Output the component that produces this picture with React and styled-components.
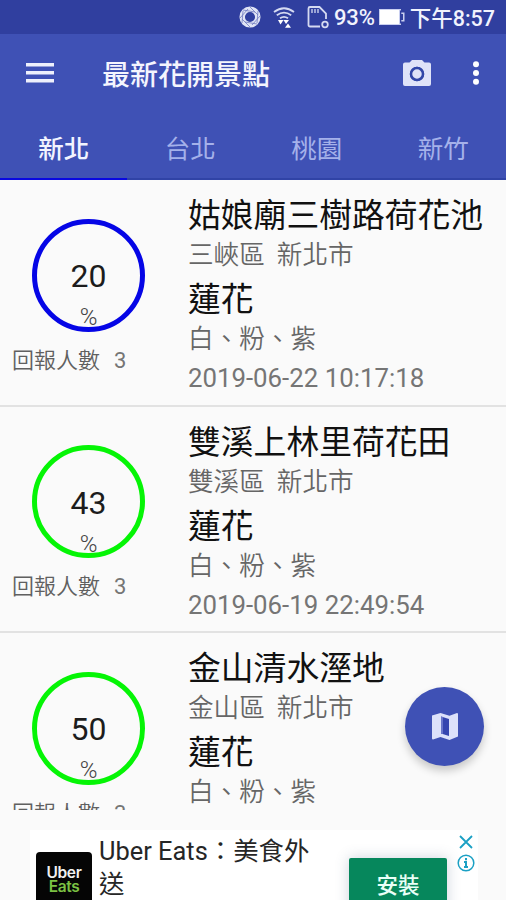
import React from "react";
import styled, { createGlobalStyle } from "styled-components";

const GlobalStyle = createGlobalStyle`
  * {
    box-sizing: border-box;
  }

  body {
    margin: 0;
    background: #fafafa;
    font-family: Roboto, "Noto Sans CJK TC", sans-serif;
    overflow: hidden;
  }
`;

const TABS = ["新北", "台北", "桃園", "新竹"];

const SPOTS = [
  {
    name: "姑娘廟三樹路荷花池",
    area: "三峽區",
    city: "新北市",
    flower: "蓮花",
    colors: "白、粉、紫",
    time: "2019-06-22 10:17:18",
    percent: 20,
    reports: 3,
    ring: "#0505e6",
  },
  {
    name: "雙溪上林里荷花田",
    area: "雙溪區",
    city: "新北市",
    flower: "蓮花",
    colors: "白、粉、紫",
    time: "2019-06-19 22:49:54",
    percent: 43,
    reports: 3,
    ring: "#05f505",
  },
  {
    name: "金山清水溼地",
    area: "金山區",
    city: "新北市",
    flower: "蓮花",
    colors: "白、粉、紫",
    percent: 50,
    reports: 3,
    ring: "#05f505",
  },
];

const StatusIcons = () => (
  <>
    <svg width="24" height="24" viewBox="0 0 24 24" fill="none">
      <circle cx="12" cy="12" r="7.800" stroke="#e0e4f5" strokeWidth="5.500" />
      <path
        d="M12 2l8 8M5 5l12 2M2 13L10 4M4 18l1-12M12 22l-8-8M19 19L7 17M22 11l-8 9M20 6l-1 12"
        stroke="#6f7abf"
        strokeWidth="0.800"
      />
    </svg>
    <svg width="24" height="24" viewBox="0 0 24 24" fill="none">
      <path
        d="M2 7Q12-.5 22 7M4.8 10.300Q12 5 19.2 10.300M8 13.3Q12 10.4 16 13.3"
        stroke="#d5daf1"
        strokeWidth="1.8"
      />
      <path d="M6 15h5.500L8.500 19.500zM11.500 15h5.500L14 19zM13 22.800h6L16 18.500z" fill="#fff" />
    </svg>
    <svg width="24" height="24" viewBox="0 0 24 24" fill="none">
      <path
        d="M14 21.500H4A1.500 1.500 0 0 1 2.500 20V3.500A1.500 1.500 0 0 1 4 2h9.500l6.500 6.500V14"
        stroke="#d5daf1"
        strokeWidth="1.800"
      />
      <path d="M6 4v4M9 4v4M12 4v4" stroke="#d5daf1" strokeWidth="1.300" />
      <circle cx="19" cy="19.500" r="2.800" stroke="#d5daf1" strokeWidth="1.800" />
    </svg>
  </>
);

const BloomRow = ({ spot }) => (
  <Row>
    <Gauge>
      <Ring color={spot.ring}>
        <Value>{spot.percent}</Value>
        <Percent>%</Percent>
      </Ring>
      <Reports>
        回報人數<span>{spot.reports}</span>
      </Reports>
    </Gauge>
    <Info>
      <Title>{spot.name}</Title>
      <Detail>
        {spot.area}
        <span>{spot.city}</span>
      </Detail>
      <Title as="h3">{spot.flower}</Title>
      <Detail>{spot.colors}</Detail>
      {spot.time && <Time>{spot.time}</Time>}
    </Info>
  </Row>
);

const App = () => {
  return (
    <Screen>
      <GlobalStyle />
      <StatusBar>
        <StatusIcons />
        <BatteryText>93%</BatteryText>
        <svg width="26" height="16" viewBox="0 0 26 16">
          <path d="M0 0h22v3.500h3.500v9H22V16H0z" fill="#c9cff0" />
          <path d="M1 1h19v14H1z" fill="#fff" />
          <path d="M21 1.500h1.300v3.500H24v6h-1.700v3.500H21z" fill="#303f9f" />
        </svg>
        <Clock>下午8:57</Clock>
      </StatusBar>

      <Toolbar>
        <svg width="28" height="20" viewBox="0 0 28 20">
          <path d="M0 0h28v3.500H0zM0 8h28v3.500H0zM0 16h28v3.500H0z" fill="#eef0fc" />
        </svg>
        <AppTitle>最新花開景點</AppTitle>
        <svg width="28" height="26" viewBox="0 0 28 26">
          <path
            fillRule="evenodd"
            d="M9 0h10l2.500 2.500H26a2 2 0 0 1 2 2V24a2 2 0 0 1-2 2H2a2 2 0 0 1-2-2V4.500a2 2 0 0 1 2-2h4.500zM14 6.800a7.200 7.200 0 1 0 0 14.400a7.200 7.200 0 0 0 0-14.400z"
            fill="#dfe3f8"
          />
          <circle cx="14" cy="14" r="4.500" fill="#dfe3f8" />
          <circle cx="14" cy="14" r="4" fill="#3f51b5" />
          <circle cx="14" cy="14" r="6" stroke="#3247a8" strokeWidth="2.500" fill="#dfe3f8" />
        </svg>
        <MoreIcon width="8" height="24" viewBox="0 0 8 24" fill="#fff">
          <circle cx="4" cy="3.200" r="3" />
          <circle cx="4" cy="12" r="3" />
          <circle cx="4" cy="20.800" r="3" />
        </MoreIcon>
      </Toolbar>

      <Tabs>
        {TABS.map((tab, i) => (
          <Tab key={tab} $active={i === 0}>
            {tab}
          </Tab>
        ))}
      </Tabs>

      <List>
        {SPOTS.map((spot) => (
          <BloomRow key={spot.name} spot={spot} />
        ))}
      </List>

      <MapButton aria-label="map">
        <svg width="26" height="27" viewBox="0 0 26 27">
          <path
            d="M0 2.500L8.500 0l9 2.700L25 0q1 0 1 1v22.500L17.500 27l-9-3L1 26.500q-1 0-1-1z"
            fill="#dce1fa"
          />
          <path d="M9 3.500l8 2.500v17l-8-2.500z" fill="#3545b0" />
          <path d="M9 3.500l2 .6v16.800l-2-.4z" fill="#6875ca" />
        </svg>
      </MapButton>

      {/* Ad banner */}
      <AdArea>
        <Ad>
          <Logo>
            <div>Uber</div>
            <div>Eats</div>
          </Logo>
          <AdText>Uber Eats：美食外送</AdText>
          <Install>安裝</Install>
          <AdChoices>
            <svg width="14" height="14" viewBox="0 0 14 14">
              <path d="M1 1l12 12M13 1L1 13" stroke="#1ba0c4" strokeWidth="1.800" />
            </svg>
            <svg width="18" height="18" viewBox="0 0 18 18" fill="none">
              <circle cx="9" cy="9" r="7.800" stroke="#1ba0c4" strokeWidth="1.500" />
              <path
                d="M9 4v2.200M7 8h2v5M7 13h4"
                stroke="#1ba0c4"
                strokeWidth="2"
              />
            </svg>
          </AdChoices>
        </Ad>
      </AdArea>
    </Screen>
  );
};

export default App;

const Screen = styled.div`
  position: relative;
  width: 506px;
  height: 900px;
  display: flex;
  flex-direction: column;
  overflow: hidden;
`;

const StatusBar = styled.div`
  height: 34px;
  flex-shrink: 0;
  background: #303f9f;
  color: #f1f3fd;
  display: flex;
  align-items: center;
  justify-content: flex-end;
  padding-right: 11px;
  white-space: nowrap;

  svg {
    flex-shrink: 0;
  }

  svg + svg {
    margin-left: 10px;
  }
`;

const BatteryText = styled.span`
  font-size: 22px;
  font-weight: 500;
  letter-spacing: -0.2px;
  line-height: 34px;
  margin: 2px 4px 0 4px;
`;

const Clock = styled.span`
  font-size: 21.5px;
  font-weight: 500;
  line-height: 34px;
  margin: 3px 0 0 5px;
`;

const Toolbar = styled.header`
  height: 81px;
  flex-shrink: 0;
  background: #3f51b5;
  display: flex;
  align-items: center;
  padding: 0 26px 3px 26px;
`;

const AppTitle = styled.h1`
  margin: 0 auto 0 48px;
  padding-top: 5px;
  color: #f4f5fe;
  font-size: 28px;
  font-weight: 500;
  line-height: 40px;
`;

const MoreIcon = styled.svg`
  margin-left: 41px;
`;

const Tabs = styled.nav`
  height: 65px;
  flex-shrink: 0;
  background: #3f51b5;
  display: grid;
  grid-template-columns: repeat(4, 1fr);
`;

const Tab = styled.div`
  display: flex;
  align-items: center;
  justify-content: center;
  padding-left: 1px;
  font-size: 25.5px;
  font-weight: ${({ $active }) => ($active ? 500 : 400)};
  color: ${({ $active }) => ($active ? "#f2f4ff" : "#a5b1ea")};
  border-bottom: 2px solid ${({ $active }) => ($active ? "#0808e0" : "#3043a6")};
`;

const List = styled.main`
  height: 630px;
  flex-shrink: 0;
  overflow: hidden;
`;

const Row = styled.section`
  height: 226.5px;
  display: flex;
  border-bottom: 2px solid #e2e2e2;
`;

const Gauge = styled.div`
  width: 188px;
  flex-shrink: 0;
  padding: 38.5px 0 0 12px;
`;

const Ring = styled.div`
  width: 113px;
  height: 113px;
  margin-left: 20px;
  border: 5px solid ${({ color }) => color};
  border-radius: 50%;
  display: flex;
  flex-direction: column;
  align-items: center;
  padding-top: 32.5px;
`;

const Value = styled.div`
  font-size: 32px;
  line-height: 40px;
  color: #1c1c1c;
`;

const Percent = styled.div`
  margin-top: 3px;
  font-size: 24px;
  font-weight: 300;
  line-height: 36px;
  color: #444;
`;

const Reports = styled.div`
  margin-top: 12px;
  font-size: 22px;
  font-weight: 350;
  line-height: 34px;
  color: #606060;

  span {
    margin-left: 14px;
    font-weight: 400;
    color: #757575;
  }
`;

const Info = styled.div`
  padding-top: 14px;
  white-space: nowrap;
`;

const Title = styled.h2`
  margin: 0;
  font-size: 32.8px;
  font-weight: 400;
  line-height: 44px;
  color: #111;
`;

const Detail = styled.div`
  margin-top: -1px;
  font-size: 25.6px;
  font-weight: 350;
  line-height: 36px;
  color: #666;

  & + h3 {
    padding-top: 5px;
  }

  span {
    margin-left: 12px;
  }
`;

const Time = styled.div`
  margin-top: 3px;
  font-size: 25.8px;
  line-height: 36px;
  color: #757575;
`;

const MapButton = styled.button`
  position: absolute;
  top: 687px;
  right: 22px;
  width: 79px;
  height: 79px;
  padding: 0;
  border: 0;
  border-radius: 50%;
  background: #3f51b5;
  display: flex;
  align-items: center;
  justify-content: center;
  box-shadow: 0 5px 9px rgba(0, 0, 0, 0.2);
`;

const AdArea = styled.aside`
  flex: 1;
  padding: 20px 28px 0 30px;
`;

const Ad = styled.div`
  height: 80px;
  display: flex;
  align-items: flex-start;
  background: #fff;
  padding-left: 6px;
`;

const Logo = styled.div`
  width: 56px;
  height: 58px;
  flex-shrink: 0;
  margin-top: 22px;
  padding-top: 14px;
  background: #050505;
  border-radius: 4px;
  color: #f1f1f1;
  font-family: Inter, sans-serif;
  font-size: 15.5px;
  font-weight: 600;
  line-height: 14px;
  letter-spacing: -0.4px;
  text-align: center;

  div + div {
    color: #7bc143;
  }
`;

const AdText = styled.div`
  width: 220px;
  margin: 5px 0 0 7px;
  font-size: 25.4px;
  line-height: 33px;
  color: #262626;
`;

const Install = styled.div`
  width: 98px;
  height: 60px;
  margin: 28px 0 0 30px;
  padding-top: 11px;
  background: #06875c;
  color: #e9fff7;
  font-size: 21.5px;
  font-weight: 500;
  line-height: 34px;
  text-align: center;
  border-radius: 2px;
  box-shadow: 0 0 14px rgba(60, 80, 120, 0.25);
  flex-shrink: 0;
`;

const AdChoices = styled.div`
  display: flex;
  flex-direction: column;
  align-items: center;
  gap: 5px;
  margin: 5px 0 0 10px;
`;
